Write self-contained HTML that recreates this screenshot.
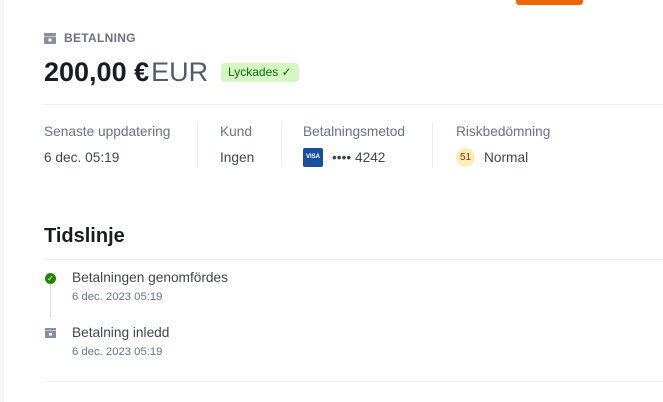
<!DOCTYPE html><html><head><style>
body{margin:0;width:663px;height:402px;background:#fff;font-family:"Liberation Sans",sans-serif;position:relative;overflow:hidden;color:#353a44}
.a{position:absolute;white-space:nowrap}
.lbl{color:#687385;font-size:13.7px}
.val{color:#414552;font-size:13.7px}
.vd{position:absolute;width:1px;background:#ebeef1;top:122px;height:46px}
.hr{position:absolute;left:44px;right:0;height:1px;background:#ebeef1}
</style></head><body>
<div class="a" style="left:0;top:0;width:4px;height:402px;background:#f6f7f9"></div>
<div class="a" style="left:516px;top:-6px;width:67px;height:11px;background:#ed6804;border-radius:3px"></div>
<svg class="a" style="left:44px;top:33px" width="12" height="11" viewBox="0 0 12 11"><rect x="0" y="0" width="12" height="3" rx="1" fill="#87909f"/><rect x="0" y="3.5" width="12" height="7.5" rx="1" fill="#87909f"/><rect x="4.5" y="5.5" width="3" height="3" fill="#fff"/></svg>
<div class="a" style="left:64px;top:31px;font-size:12px;color:#687385;font-weight:bold;letter-spacing:.3px">BETALNING</div>
<div class="a" style="left:44px;top:57px;font-size:27px;font-weight:bold;color:#1a1b25">200,00 €<span style="font-weight:normal;color:#545969;margin-left:2px">EUR</span></div>
<div class="a" style="left:221px;top:63px;height:19px;padding:0 7px;background:#d7f7c2;border-radius:4px;color:#05690d;font-size:12px;line-height:19px">Lyckades ✓</div>
<div class="hr" style="top:104px"></div>
<div class="a lbl" style="left:44px;top:124px">Senaste uppdatering</div>
<div class="a val" style="left:44px;top:150px">6 dec. 05:19</div>
<div class="vd" style="left:197px"></div>
<div class="a lbl" style="left:220px;top:124px">Kund</div>
<div class="a val" style="left:220px;top:150px">Ingen</div>
<div class="vd" style="left:281px"></div>
<div class="a lbl" style="left:303px;top:124px">Betalningsmetod</div>
<div class="a" style="left:303px;top:148px;width:20px;height:19px;background:#1a4fa0;border-radius:2px;color:#fff;font-size:6px;font-weight:bold;line-height:19px;text-align:center">VISA</div>
<div class="a val" style="left:332px;top:150px">•••• 4242</div>
<div class="vd" style="left:432px"></div>
<div class="a lbl" style="left:456px;top:124px">Riskbedömning</div>
<div class="a" style="left:456px;top:148px;width:19px;height:19px;background:#fcedb9;border-radius:50%;color:#a82c00;font-size:10px;line-height:19px;text-align:center">51</div>
<div class="a val" style="left:484px;top:150px">Normal</div>
<div class="a" style="left:44px;top:225px;font-size:20px;font-weight:bold;color:#1a1b25">Tidslinje</div>
<div class="hr" style="top:259px"></div>
<div class="a" style="left:50px;top:284px;width:1px;height:34px;background:#d5dbe1"></div>
<div class="a" style="left:45px;top:273px;width:11px;height:11px;border-radius:50%;background:#228403;color:#fff;font-size:8px;line-height:11px;text-align:center">✓</div>
<div class="a" style="left:72px;top:270px;font-size:13.7px;color:#414552">Betalningen genomfördes</div>
<div class="a" style="left:72px;top:291px;font-size:11.3px;color:#687385">6 dec. 2023 05:19</div>
<svg class="a" style="left:45px;top:328px" width="11" height="10" viewBox="0 0 11 10"><rect x="0" y="0" width="11" height="2.5" fill="#87909f"/><rect x="0" y="3" width="11" height="7" fill="#87909f"/><rect x="4" y="5" width="3" height="2.5" fill="#fff"/></svg>
<div class="a" style="left:72px;top:325px;font-size:13.7px;color:#414552">Betalning inledd</div>
<div class="a" style="left:72px;top:346px;font-size:11.3px;color:#687385">6 dec. 2023 05:19</div>
<div class="hr" style="top:381px"></div>
</body></html>
